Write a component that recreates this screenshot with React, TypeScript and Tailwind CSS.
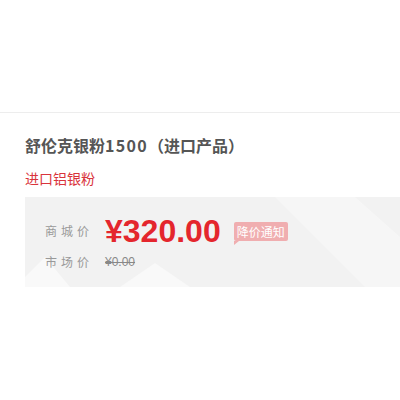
import React from "react";

const cjk = { fontFamily: '"Noto Sans CJK SC", "Noto Sans", sans-serif' };

export default function App() {
  return (
    <div className="w-[400px] h-[400px] bg-white overflow-hidden" style={cjk}>
      <div className="h-[113px] border-b border-[#ededed]" />
      <div className="pl-[25px]">
        <h1 className="mt-[20px] text-[16px] leading-[24px] font-bold text-[#555555]">
          舒伦克银粉<span className="tracking-[1.3px]">1500</span>（进口产品）
        </h1>
        <p className="mt-[11px] text-[14px] leading-[20px] text-[#d9343c]">进口铝银粉</p>

        <div className="relative mt-[9px] h-[90px] bg-[#f2f2f2] pl-[20px] pt-[14px] overflow-hidden">
          <svg className="absolute inset-0" width="375" height="90" viewBox="0 0 375 90">
            <polygon points="-10,90 20,60 45,90" fill="#ffffff" opacity="0.55" />
            <polygon points="95,90 130,66 165,90" fill="#ffffff" opacity="0.5" />
            <polygon points="250,0 330,0 375,40 375,90 340,90" fill="#ffffff" opacity="0.35" />
          </svg>
          <div className="relative flex items-center h-[40px]">
            <span className="w-[60px] text-[12px] tracking-[4px] text-[#999999]">商城价</span>
            <span
              className="text-[32px] leading-[40px] font-bold text-[#e4262d]"
              style={{ fontFamily: '"Liberation Sans", Arial, sans-serif' }}
            >
              ¥320.00
            </span>
            <span className="relative ml-[13px] h-[19px] px-[3px] bg-[#f0aeb0] text-white text-[12px] leading-[19px] rounded-[2px]">
              降价通知
              <span className="absolute left-0 bottom-[-4px] w-0 h-0 border-t-[4px] border-t-[#f0aeb0] border-r-[5px] border-r-transparent" />
            </span>
          </div>
          <div className="relative mt-[1px] flex items-center h-[20px]">
            <span className="w-[60px] text-[12px] tracking-[4px] text-[#999999]">市场价</span>
            <span
              className="text-[12px] text-[#888888] line-through"
              style={{ fontFamily: '"Liberation Sans", Arial, sans-serif' }}
            >
              ¥0.00
            </span>
          </div>
        </div>
      </div>
    </div>
  );
}
